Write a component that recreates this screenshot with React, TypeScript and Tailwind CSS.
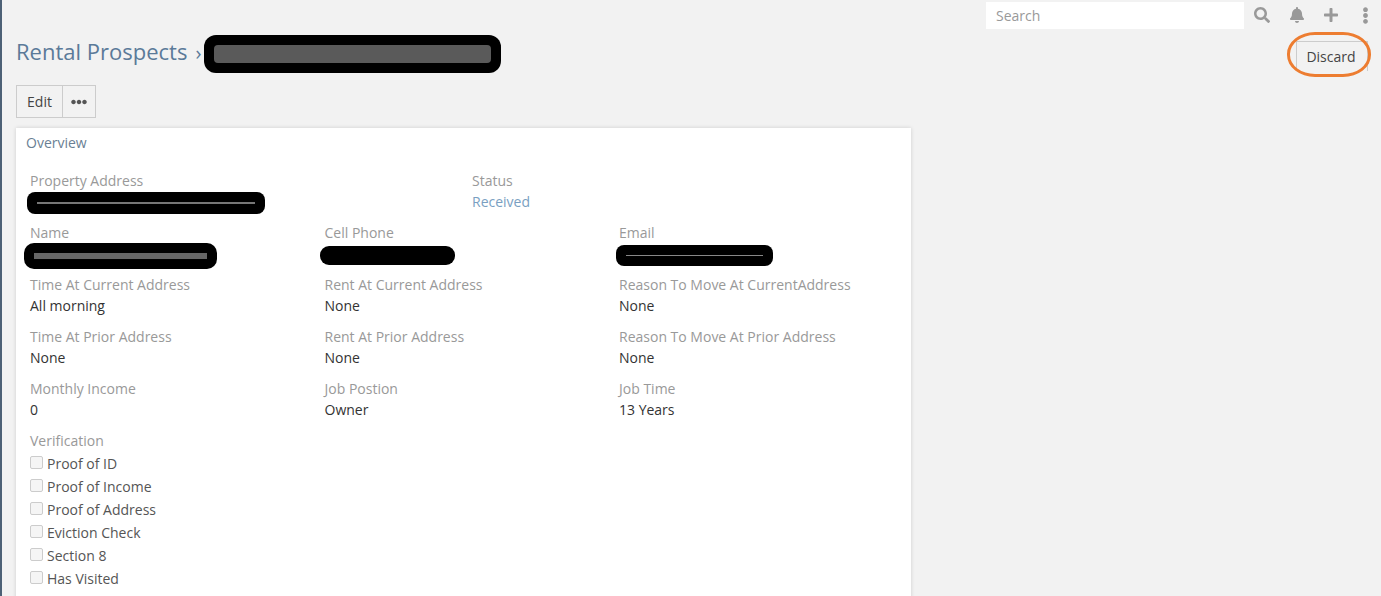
import { FaSearch, FaBell, FaPlus, FaEllipsisV, FaEllipsisH } from "react-icons/fa";

function Field({ label, value, tone = "text-[#333333]" }: { label: string; value?: string; tone?: string }) {
  return (
    <div className="mb-[10px] h-[42px] leading-[21px]">
      <div className="text-[#999999]">{label}</div>
      <div className={tone}>{value}</div>
    </div>
  );
}

function Redacted({ label, box, inner }: { label: string; box: string; inner?: string }) {
  return (
    <div className="mb-[10px] h-[42px] leading-[21px]">
      <div className="text-[#999999]">{label}</div>
      <div className="relative h-[21px]">
        <div className={box}>{inner ? <div className={inner} /> : null}</div>
      </div>
    </div>
  );
}

const checks = ["Proof of ID", "Proof of Income", "Proof of Address", "Eviction Check", "Section 8", "Has Visited"];

export default function App() {
  return (
    <div className="h-[596px] overflow-hidden bg-[#f2f2f2] border-l-2 border-[#4d6176] pl-[14px] text-[14px] font-['Open_Sans',sans-serif]">
      <div className="flex h-[35px] items-start justify-end pt-[2px]">
        <div className="flex h-[27px] w-[258px] items-center bg-white pl-[10px] text-[#999999]">Search</div>
        <div className="flex h-[26px] w-[137px] items-center text-[#999999]">
          <span className="flex w-[36px] justify-center"><FaSearch size={16} /></span>
          <span className="flex w-[34px] justify-center"><FaBell size={16} /></span>
          <span className="flex w-[34px] justify-center pl-[2px]"><FaPlus size={16} /></span>
          <span className="flex w-[34px] justify-center pl-[2px]"><FaEllipsisV size={17} /></span>
        </div>
      </div>

      <div className="flex h-[50px] items-start justify-between">
        <div className="flex h-[38px] items-center">
          <span className="mb-[6px] text-[22px] leading-[34px] text-[#5b7a99]">Rental Prospects</span>
          <span className="mb-[2px] ml-[8px] text-[20px] leading-[24px] text-[#5b7a99]">›</span>
          <div className="ml-[3px] flex h-[38px] w-[297px] items-center justify-center rounded-[12px] bg-black">
            <div className="h-[18px] w-[277px] rounded-[4px] bg-[#5a5a5a]" />
          </div>
        </div>
        <div className="relative mr-[13px] mt-[6px]">
          <button className="flex h-[30px] w-[72px] items-center justify-center border border-b-0 border-[#cccccc] pr-[2px] text-[#444444]">Discard</button>
          <div className="absolute -left-[9px] -right-[3px] -top-[9px] -bottom-[6px] rounded-[28px/22px] border-[3px] border-[#ed7d31]" />
        </div>
      </div>

      <div className="flex h-[33px] w-[80px] border border-[#cccccc] text-[#444444]">
        <div className="flex w-[46px] items-center justify-center border-r border-[#cccccc]">Edit</div>
        <div className="flex flex-1 items-center justify-center text-[#555555]"><FaEllipsisH size={16} /></div>
      </div>

      <div className="mt-[10px] h-[600px] w-[895px] bg-white pl-[14px] shadow-[0_0_4px_rgba(0,0,0,0.15)]">
        <div className="-ml-[4px] h-[42px] pt-[4px] leading-[21px] text-[#6a7f94]">Overview</div>

        <div className="grid grid-cols-[442px_442px]">
          <Redacted
            label="Property Address"
            box="absolute -left-[3px] top-[1px] flex h-[22px] w-[238px] items-center justify-center rounded-[8px] bg-black"
            inner="h-[2px] w-[218px] bg-[#777777]"
          />
          <Field label="Status" value="Received" tone="text-[#7a9fc2]" />
        </div>

        <div className="grid grid-cols-[294.5px_294.5px_294.5px]">
          <Redacted
            label="Name"
            box="absolute -left-[6px] top-[0px] flex h-[26px] w-[193px] items-center justify-center rounded-[10px] bg-black"
            inner="h-[6px] w-[173px] bg-[#666666]"
          />
          <Redacted
            label="Cell Phone"
            box="absolute -left-[5px] top-[3px] h-[19px] w-[135px] rounded-[9px] bg-black"
          />
          <Redacted
            label="Email"
            box="absolute -left-[3px] top-[2px] flex h-[21px] w-[157px] items-center justify-center rounded-[8px] bg-black"
            inner="h-px w-[137px] bg-[#888888]"
          />
          <Field label="Time At Current Address" value="All morning" />
          <Field label="Rent At Current Address" value="None" />
          <Field label="Reason To Move At CurrentAddress" value="None" />
          <Field label="Time At Prior Address" value="None" />
          <Field label="Rent At Prior Address" value="None" />
          <Field label="Reason To Move At Prior Address" value="None" />
          <Field label="Monthly Income" value="0" />
          <Field label="Job Postion" value="Owner" />
          <Field label="Job Time" value="13 Years" />
        </div>

        <div className="mb-px leading-[21px] text-[#999999]">Verification</div>
        <div className="flex flex-col">
          {checks.map((c) => (
            <div key={c} className="flex h-[23px] items-center text-[#555555]">
              <span className="mb-[2px] mr-[4px] h-[13px] w-[13px] rounded-[2px] border border-[#cccccc] bg-[#f5f5f5]" />
              {c}
            </div>
          ))}
        </div>
      </div>
    </div>
  );
}
